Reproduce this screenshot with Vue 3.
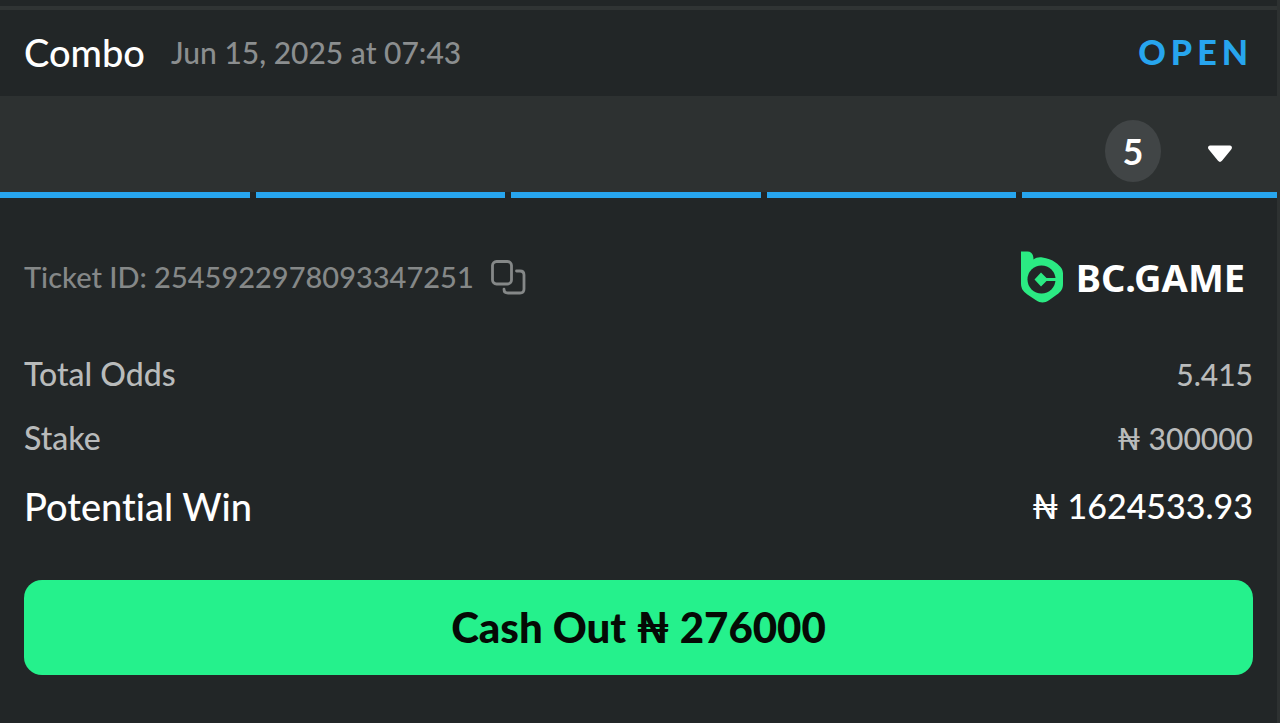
<script setup>
import { ref } from 'vue'

const ticketId = '2545922978093347251'
const selections = [1, 2, 3, 4, 5]
const expanded = ref(false)

function copyTicket() {
  navigator.clipboard?.writeText(ticketId)
}
</script>

<template>
  <main class="ticket">
    <header class="head">
      <h1 class="title">Combo</h1>
      <time class="date" datetime="2025-06-15T07:43">Jun 15, 2025 at 07:43</time>
      <span class="status">OPEN</span>
    </header>

    <section class="summary">
      <span class="count">{{ selections.length }}</span>
      <button class="toggle" type="button" aria-label="Show selections" :aria-expanded="expanded" @click="expanded = !expanded">
        <svg width="26" height="18" viewBox="0 0 26 18" aria-hidden="true">
          <path d="M3.5 0.5h19c2.4 0 3.2 2.3 1.7 4L15 15.8c-1.3 1.5-2.7 1.5-4 0L1.8 4.500C.3 2.800 1.100.5 3.500.5z" fill="#fff" />
        </svg>
      </button>
    </section>
    <div class="bars">
      <span v-for="s in selections" :key="s" class="bar"></span>
    </div>

    <section class="body">
      <div class="id-row">
        <span class="ticket-id">Ticket ID: {{ ticketId }}</span>
        <button class="copy" type="button" aria-label="Copy ticket ID" @click="copyTicket">
          <svg width="36" height="36" viewBox="0 0 36 36" fill="none" stroke="#858888" stroke-width="2.800" stroke-linecap="round" aria-hidden="true">
            <rect x="2.500" y="2.500" width="19" height="22.500" rx="4" />
            <path d="M26.500 12h3.500c2.600 0 4 1.400 4 4v14c0 2.600-1.400 4-4 4H18c-2.600 0-4-1.200-4-3.800" />
          </svg>
        </button>
        <div class="brand">
          <svg width="44" height="52" viewBox="0 0 44 52" aria-hidden="true">
            <path d="M1 .5h6.500c4 0 6 3 6 8 2.500-2 5.500-2.500 9-2 5 .6 9 2.200 13 5 5 3.700 7.500 6.500 7.500 11V33c0 5-2 7.500-6 10.500l-8 5.700c-4.500 3-8.500 3-13 0l-9-6C3 40.300 1 37.500 1 32.500z" fill="#2bea83" />
            <circle cx="21.500" cy="28.500" r="14" fill="#222627" />
            <path d="M21 21.500l5.500 5.500H37v3H26.500L21 35.500 14.500 28.500z" fill="#2bea83" />
          </svg>
          <span class="brand-name">BC.GAME</span>
        </div>
      </div>

      <dl class="rows">
        <div class="row">
          <dt>Total Odds</dt>
          <dd>5.415</dd>
        </div>
        <div class="row">
          <dt>Stake</dt>
          <dd>₦ 300000</dd>
        </div>
        <div class="row win">
          <dt>Potential Win</dt>
          <dd>₦ 1624533.93</dd>
        </div>
      </dl>

      <button class="cashout" type="button">Cash Out ₦ 276000</button>
    </section>
  </main>
</template>

<style>
body {
  margin: 0;
  background: #222627;
}
</style>

<style scoped>
.ticket {
  box-sizing: border-box;
  min-height: 100vh;
  padding-top: 6px;
  border-right: 3px solid #2d3131;
  background: #222627;
  color: #fff;
  font-family: Lato, "Noto Sans", sans-serif;
  font-size: 30px;
  line-height: 40px;
  font-weight: 500;
  font-variant-ligatures: none;
}

button {
  border: 0;
  padding: 0;
  background: none;
  color: inherit;
  font: inherit;
  cursor: pointer;
}

.head {
  display: flex;
  align-items: center;
  gap: 26px;
  padding: 22px 24px 24px;
  border-top: 4px solid #303434;
}

.title {
  margin: 0;
  font-size: 38px;
  font-weight: 500;
}

.date {
  color: #8b8e8f;
}

.status {
  margin-left: auto;
  color: #27a5ee;
  font-size: 34px;
  font-weight: 900;
  letter-spacing: 5px;
}

.summary {
  display: flex;
  align-items: center;
  justify-content: flex-end;
  gap: 46px;
  padding: 24px 44px 10px 24px;
  background: #2d3131;
}

.count {
  width: 56px;
  border-radius: 50%;
  background: #414546;
  font-size: 36px;
  font-weight: 700;
  line-height: 62px;
  text-align: center;
}

.toggle,
.copy {
  display: flex;
}

.toggle {
  padding-top: 6px;
}

.bars {
  display: grid;
  grid-template-columns: repeat(4, 250fr) 255fr;
  gap: 6px;
  background: #222627;
}

.bar {
  height: 6px;
  background: #27a5ee;
}

.body {
  padding: 52px 24px 48px;
}

.id-row {
  display: flex;
  align-items: center;
}

.ticket-id {
  color: #858888;
  font-size: 29px;
}

.copy {
  margin-left: 16px;
}

.brand {
  display: flex;
  align-items: center;
  gap: 12px;
  margin-left: auto;
  padding-right: 8px;
}

.brand-name {
  font-family: "Noto Sans", sans-serif;
  font-size: 38px;
  font-weight: 700;
  line-height: 54px;
}

.rows {
  margin: 50px 0 0;
}

.row {
  display: flex;
  justify-content: space-between;
  margin-bottom: 24px;
  color: #b9bbbb;
}

.row dt {
  font-size: 32px;
}

.row dd {
  margin: 0;
  font-size: 30px;
}

.row.win {
  margin: 28px 0 0;
  color: #fff;
}

.win dt {
  font-size: 38px;
}

.win dd {
  font-size: 34px;
}

.cashout {
  display: block;
  width: 100%;
  margin-top: 54px;
  border-radius: 18px;
  background: #25f18c;
  color: #050a05;
  font-size: 42px;
  font-weight: 900;
  line-height: 95px;
}
</style>
